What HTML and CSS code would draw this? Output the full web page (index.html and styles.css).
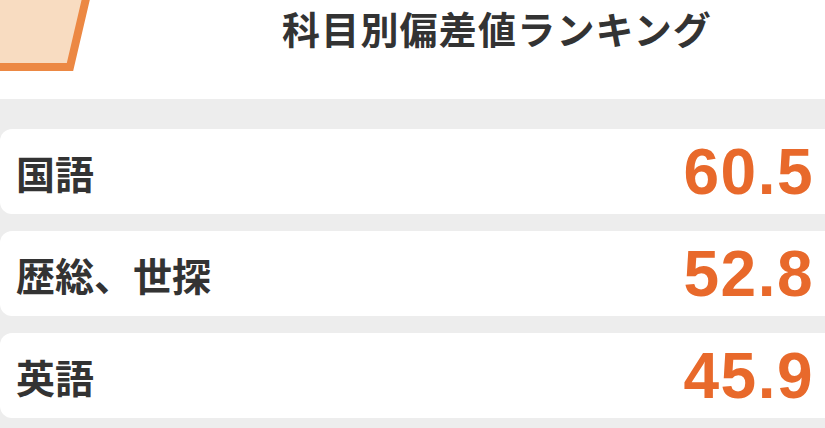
FILE: index.html
```html
<!DOCTYPE html>
<html lang="ja">
<head>
<meta charset="utf-8">
<link rel="stylesheet" href="styles.css">
</head>
<body>
<header class="header">
  <svg class="tab-shape" width="96" height="72" viewBox="0 0 96 72">
    <polygon points="-10,-10 88,-10 70,67 -10,67" fill="#f8dcc1" stroke="#ec8843" stroke-width="8"/>
  </svg>
  <h1 class="title">科目別偏差値ランキング</h1>
</header>
<main class="list">
  <div class="card"><span class="subject">国語</span><span class="score">60.5</span></div>
  <div class="card"><span class="subject">歴総、世探</span><span class="score">52.8</span></div>
  <div class="card"><span class="subject">英語</span><span class="score">45.9</span></div>
</main>
</body>
</html>
```
FILE: styles.css
```css
html, body {
  margin: 0;
  padding: 0;
  background: #ededed;
  overflow: hidden;
}
body {
  width: 825px;
  height: 428px;
  font-family: "Noto Sans CJK JP", "Noto Sans", sans-serif;
}
.header {
  background: #ffffff;
  height: 99px;
  display: flex;
  align-items: flex-start;
}
.tab-shape {
  flex: none;
  display: block;
}
.title {
  margin: 0 0 0 186px;
  font-size: 38px;
  line-height: normal;
  font-weight: 700;
  color: #333333;
  letter-spacing: 1.2px;
}
.list {
  display: flex;
  flex-direction: column;
  gap: 17px;
  padding-top: 30px;
}
.card {
  background: #ffffff;
  height: 85px;
  margin-right: -20px;
  border-radius: 12px 0 0 12px;
  display: flex;
  align-items: center;
  justify-content: space-between;
  padding: 0 31px 0 16px;
}
.subject {
  font-size: 39px;
  font-weight: 700;
  color: #333333;
}
.score {
  font-family: "Liberation Sans", Arial, sans-serif;
  font-weight: 700;
  font-size: 64px;
  letter-spacing: 1.5px;
  color: #e8692b;
  line-height: 1;
}
```
